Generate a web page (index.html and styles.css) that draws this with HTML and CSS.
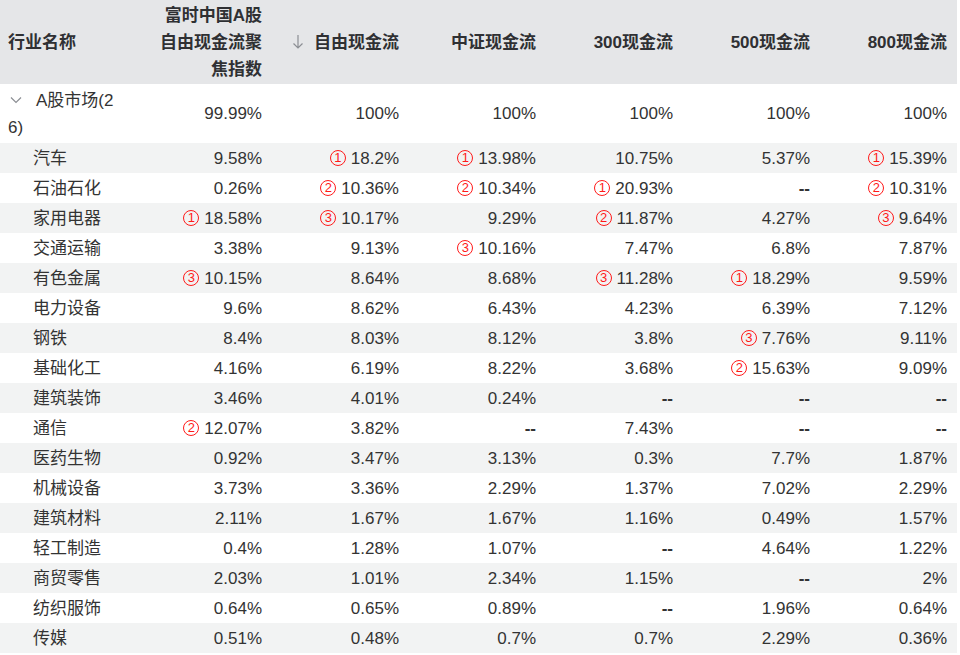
FILE: index.html
```html
<!DOCTYPE html>
<html lang="zh-CN">
<head>
<meta charset="utf-8">
<title>行业现金流</title>
<link rel="stylesheet" href="styles.css">
</head>
<body>
<table class="grid">
  <colgroup>
    <col class="c-name"><col class="c-num"><col class="c-num"><col class="c-num"><col class="c-num"><col class="c-num"><col class="c-num">
  </colgroup>
  <thead>
    <tr>
      <th class="name">行业名称</th>
      <th>富时中国A股<br>自由现金流聚<br>焦指数</th>
      <th><svg class="sort" width="12" height="16" viewBox="0 0 12 16"><path d="M6 1v13M1.5 9.5L6 14l4.5-4.5" fill="none" stroke="#8c8f94" stroke-width="1.2"/></svg>自由现金流</th>
      <th>中证现金流</th>
      <th>300现金流</th>
      <th>500现金流</th>
      <th>800现金流</th>
    </tr>
  </thead>
  <tbody>
    <tr class="root">
      <td class="name"><svg class="chev" width="12" height="8" viewBox="0 0 12 8"><path d="M1 1.5l5 5 5-5" fill="none" stroke="#8c8f94" stroke-width="1.2"/></svg>A股市场(26)</td>
      <td>99.99%</td><td>100%</td><td>100%</td><td>100%</td><td>100%</td><td>100%</td>
    </tr>
    <tr><td class="name sub">汽车</td><td>9.58%</td><td><span class="rk">1</span>18.2%</td><td><span class="rk">1</span>13.98%</td><td>10.75%</td><td>5.37%</td><td><span class="rk">1</span>15.39%</td></tr>
    <tr><td class="name sub">石油石化</td><td>0.26%</td><td><span class="rk">2</span>10.36%</td><td><span class="rk">2</span>10.34%</td><td><span class="rk">1</span>20.93%</td><td class="na">--</td><td><span class="rk">2</span>10.31%</td></tr>
    <tr><td class="name sub">家用电器</td><td><span class="rk">1</span>18.58%</td><td><span class="rk">3</span>10.17%</td><td>9.29%</td><td><span class="rk">2</span>11.87%</td><td>4.27%</td><td><span class="rk">3</span>9.64%</td></tr>
    <tr><td class="name sub">交通运输</td><td>3.38%</td><td>9.13%</td><td><span class="rk">3</span>10.16%</td><td>7.47%</td><td>6.8%</td><td>7.87%</td></tr>
    <tr><td class="name sub">有色金属</td><td><span class="rk">3</span>10.15%</td><td>8.64%</td><td>8.68%</td><td><span class="rk">3</span>11.28%</td><td><span class="rk">1</span>18.29%</td><td>9.59%</td></tr>
    <tr><td class="name sub">电力设备</td><td>9.6%</td><td>8.62%</td><td>6.43%</td><td>4.23%</td><td>6.39%</td><td>7.12%</td></tr>
    <tr><td class="name sub">钢铁</td><td>8.4%</td><td>8.03%</td><td>8.12%</td><td>3.8%</td><td><span class="rk">3</span>7.76%</td><td>9.11%</td></tr>
    <tr><td class="name sub">基础化工</td><td>4.16%</td><td>6.19%</td><td>8.22%</td><td>3.68%</td><td><span class="rk">2</span>15.63%</td><td>9.09%</td></tr>
    <tr><td class="name sub">建筑装饰</td><td>3.46%</td><td>4.01%</td><td>0.24%</td><td class="na">--</td><td class="na">--</td><td class="na">--</td></tr>
    <tr><td class="name sub">通信</td><td><span class="rk">2</span>12.07%</td><td>3.82%</td><td class="na">--</td><td>7.43%</td><td class="na">--</td><td class="na">--</td></tr>
    <tr><td class="name sub">医药生物</td><td>0.92%</td><td>3.47%</td><td>3.13%</td><td>0.3%</td><td>7.7%</td><td>1.87%</td></tr>
    <tr><td class="name sub">机械设备</td><td>3.73%</td><td>3.36%</td><td>2.29%</td><td>1.37%</td><td>7.02%</td><td>2.29%</td></tr>
    <tr><td class="name sub">建筑材料</td><td>2.11%</td><td>1.67%</td><td>1.67%</td><td>1.16%</td><td>0.49%</td><td>1.57%</td></tr>
    <tr><td class="name sub">轻工制造</td><td>0.4%</td><td>1.28%</td><td>1.07%</td><td class="na">--</td><td>4.64%</td><td>1.22%</td></tr>
    <tr><td class="name sub">商贸零售</td><td>2.03%</td><td>1.01%</td><td>2.34%</td><td>1.15%</td><td class="na">--</td><td>2%</td></tr>
    <tr><td class="name sub">纺织服饰</td><td>0.64%</td><td>0.65%</td><td>0.89%</td><td class="na">--</td><td>1.96%</td><td>0.64%</td></tr>
    <tr><td class="name sub">传媒</td><td>0.51%</td><td>0.48%</td><td>0.7%</td><td>0.7%</td><td>2.29%</td><td>0.36%</td></tr>
  </tbody>
</table>
</body>
</html>
```

FILE: styles.css
```css
html, body {
  margin: 0;
  padding: 0;
  background: #ffffff;
}
body {
  font-family: "Liberation Sans", "Noto Sans CJK SC", sans-serif;
  font-size: 17px;
  color: #333333;
}
.grid {
  width: 957px;
  border-collapse: collapse;
  border-spacing: 0;
  table-layout: fixed;
}
.c-name { width: 135px; }
.c-num { width: 137px; }
.grid th,
.grid td {
  padding: 1.5px 10px 1.5px 8px;
  line-height: 27px;
  text-align: right;
  vertical-align: middle;
  white-space: nowrap;
}
.grid tbody td {
  height: 27px;
}
.grid thead th {
  background: #e5e6e8;
  font-weight: bold;
  color: #2f3033;
}
.grid th.name,
.grid td.name {
  text-align: left;
}
.grid td.sub {
  padding-left: 33px;
}
.grid tr.root td {
  padding-top: 2.5px;
  padding-bottom: 2.5px;
}
.grid tr.root td.name {
  white-space: normal;
  word-break: break-all;
  padding-right: 14px;
}
.grid tbody tr:nth-child(even) td {
  background: #f2f3f3;
}
.chev {
  display: inline-block;
  vertical-align: middle;
  margin: -3px 14px 0 2px;
}
.sort {
  display: inline-block;
  vertical-align: middle;
  margin: -3px 10px 0 0;
}
.rk {
  display: inline-block;
  box-sizing: border-box;
  width: 16px;
  height: 16px;
  border: 1px solid #ff1a1a;
  border-radius: 50%;
  color: #ff1a1a;
  font-size: 13px;
  line-height: 14px;
  text-align: center;
  vertical-align: 2px;
  margin-right: 5px;
}
.na {
  font-weight: bold;
}
```
